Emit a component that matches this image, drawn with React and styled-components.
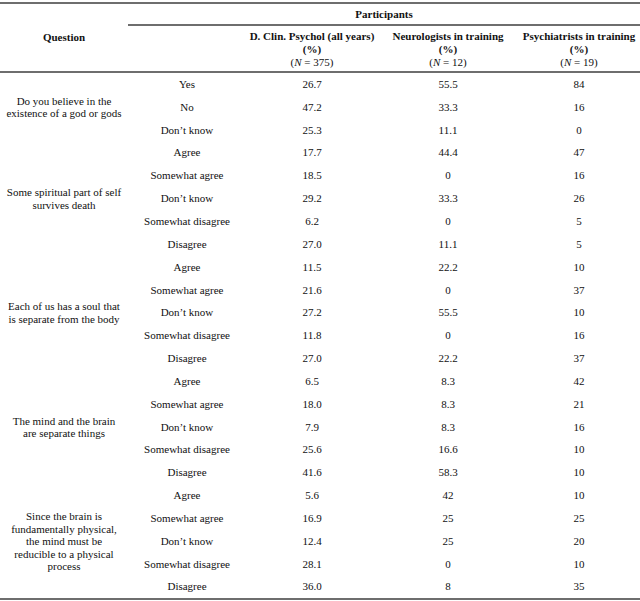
import React from 'react'
import styled, { createGlobalStyle } from 'styled-components'

const GlobalStyle = createGlobalStyle`
  html, body {
    margin: 0;
    padding: 0;
    background: #ffffff;
  }
  body {
    font-family: "Liberation Serif", "Times New Roman", serif;
    color: #111111;
  }
`

const groups = [
  {
    question: ['Do you believe in the', 'existence of a god or gods'],
    rows: [
      ['Yes', '26.7', '55.5', '84'],
      ['No', '47.2', '33.3', '16'],
      ['Don’t know', '25.3', '11.1', '0'],
    ],
  },
  {
    question: ['Some spiritual part of self', 'survives death'],
    rows: [
      ['Agree', '17.7', '44.4', '47'],
      ['Somewhat agree', '18.5', '0', '16'],
      ['Don’t know', '29.2', '33.3', '26'],
      ['Somewhat disagree', '6.2', '0', '5'],
      ['Disagree', '27.0', '11.1', '5'],
    ],
  },
  {
    question: ['Each of us has a soul that', 'is separate from the body'],
    rows: [
      ['Agree', '11.5', '22.2', '10'],
      ['Somewhat agree', '21.6', '0', '37'],
      ['Don’t know', '27.2', '55.5', '10'],
      ['Somewhat disagree', '11.8', '0', '16'],
      ['Disagree', '27.0', '22.2', '37'],
    ],
  },
  {
    question: ['The mind and the brain', 'are separate things'],
    rows: [
      ['Agree', '6.5', '8.3', '42'],
      ['Somewhat agree', '18.0', '8.3', '21'],
      ['Don’t know', '7.9', '8.3', '16'],
      ['Somewhat disagree', '25.6', '16.6', '10'],
      ['Disagree', '41.6', '58.3', '10'],
    ],
  },
  {
    question: [
      'Since the brain is',
      'fundamentally physical,',
      'the mind must be',
      'reducible to a physical',
      'process',
    ],
    rows: [
      ['Agree', '5.6', '42', '10'],
      ['Somewhat agree', '16.9', '25', '25'],
      ['Don’t know', '12.4', '25', '20'],
      ['Somewhat disagree', '28.1', '0', '10'],
      ['Disagree', '36.0', '8', '35'],
    ],
  },
]

const participants = [
  { title: 'D. Clin. Psychol (all years)', n: '375' },
  { title: 'Neurologists in training', n: '12' },
  { title: 'Psychiatrists in training', n: '19' },
]

// column widths: question, answer, then the three groups
const columns = [128, 118, 132, 140, 122]

const RULE = '2px solid #6e6e6e'

const Table = styled.table`
  width: 640px;
  margin-top: 2px;
  border-collapse: separate;
  border-spacing: 0;
  table-layout: fixed;
  font-size: 11px;
  text-align: center;
`

const Col = styled.col`
  width: ${p => p.$w}px;
`

const HeadCell = styled.th`
  font-weight: bold;
  padding: 0;
  vertical-align: middle;
  line-height: 13px;
  border-top: ${RULE};
  border-bottom: ${RULE};
  height: ${p => p.$h || 'auto'};
`

const ColHead = styled.th`
  font-weight: bold;
  padding: 4px 0 2px;
  line-height: 13px;
  border-bottom: ${RULE};
  vertical-align: middle;
`

const NLine = styled.span`
  display: block;
  font-weight: normal;
  i { font-style: italic; }
`

const Cell = styled.td`
  padding: 0;
  height: 22.85px;
  vertical-align: middle;
  line-height: 13px;
  white-space: nowrap;
  border-bottom: ${p => (p.$last ? RULE : 'none')};
`

const QuestionCell = styled.td`
  padding: 0 4px;
  vertical-align: middle;
  line-height: 12.5px;
  border-bottom: ${p => (p.$last ? RULE : 'none')};
`

const Line = styled.span`
  display: block;
  white-space: nowrap;
`

const App = () => {
  return (
    <>
      <GlobalStyle />
      <Table>
        <colgroup>
          {columns.map((w, i) => <Col key={i} $w={w} />)}
        </colgroup>
        <thead>
          <tr>
            <HeadCell rowSpan={2}>Question</HeadCell>
            <HeadCell colSpan={4} $h="20px">Participants</HeadCell>
          </tr>
          <tr>
            <ColHead />
            {participants.map((p, i) => (
              <ColHead key={i}>
                {p.title}
                <br />
                (%)
                <NLine>(<i>N</i> = {p.n})</NLine>
              </ColHead>
            ))}
          </tr>
        </thead>
        <tbody>
          {groups.map((group, gi) => {
            const lastGroup = gi === groups.length - 1
            return group.rows.map((row, ri) => {
              const last = lastGroup && ri === group.rows.length - 1
              return (
                <tr key={`${gi}-${ri}`}>
                  {ri === 0 && (
                    <QuestionCell rowSpan={group.rows.length} $last={lastGroup}>
                      {group.question.map((line, li) => (
                        <Line key={li}>{line}</Line>
                      ))}
                    </QuestionCell>
                  )}
                  {row.map((value, ci) => (
                    <Cell key={ci} $last={last}>{value}</Cell>
                  ))}
                </tr>
              )
            })
          })}
        </tbody>
      </Table>
    </>
  )
}

export default App
